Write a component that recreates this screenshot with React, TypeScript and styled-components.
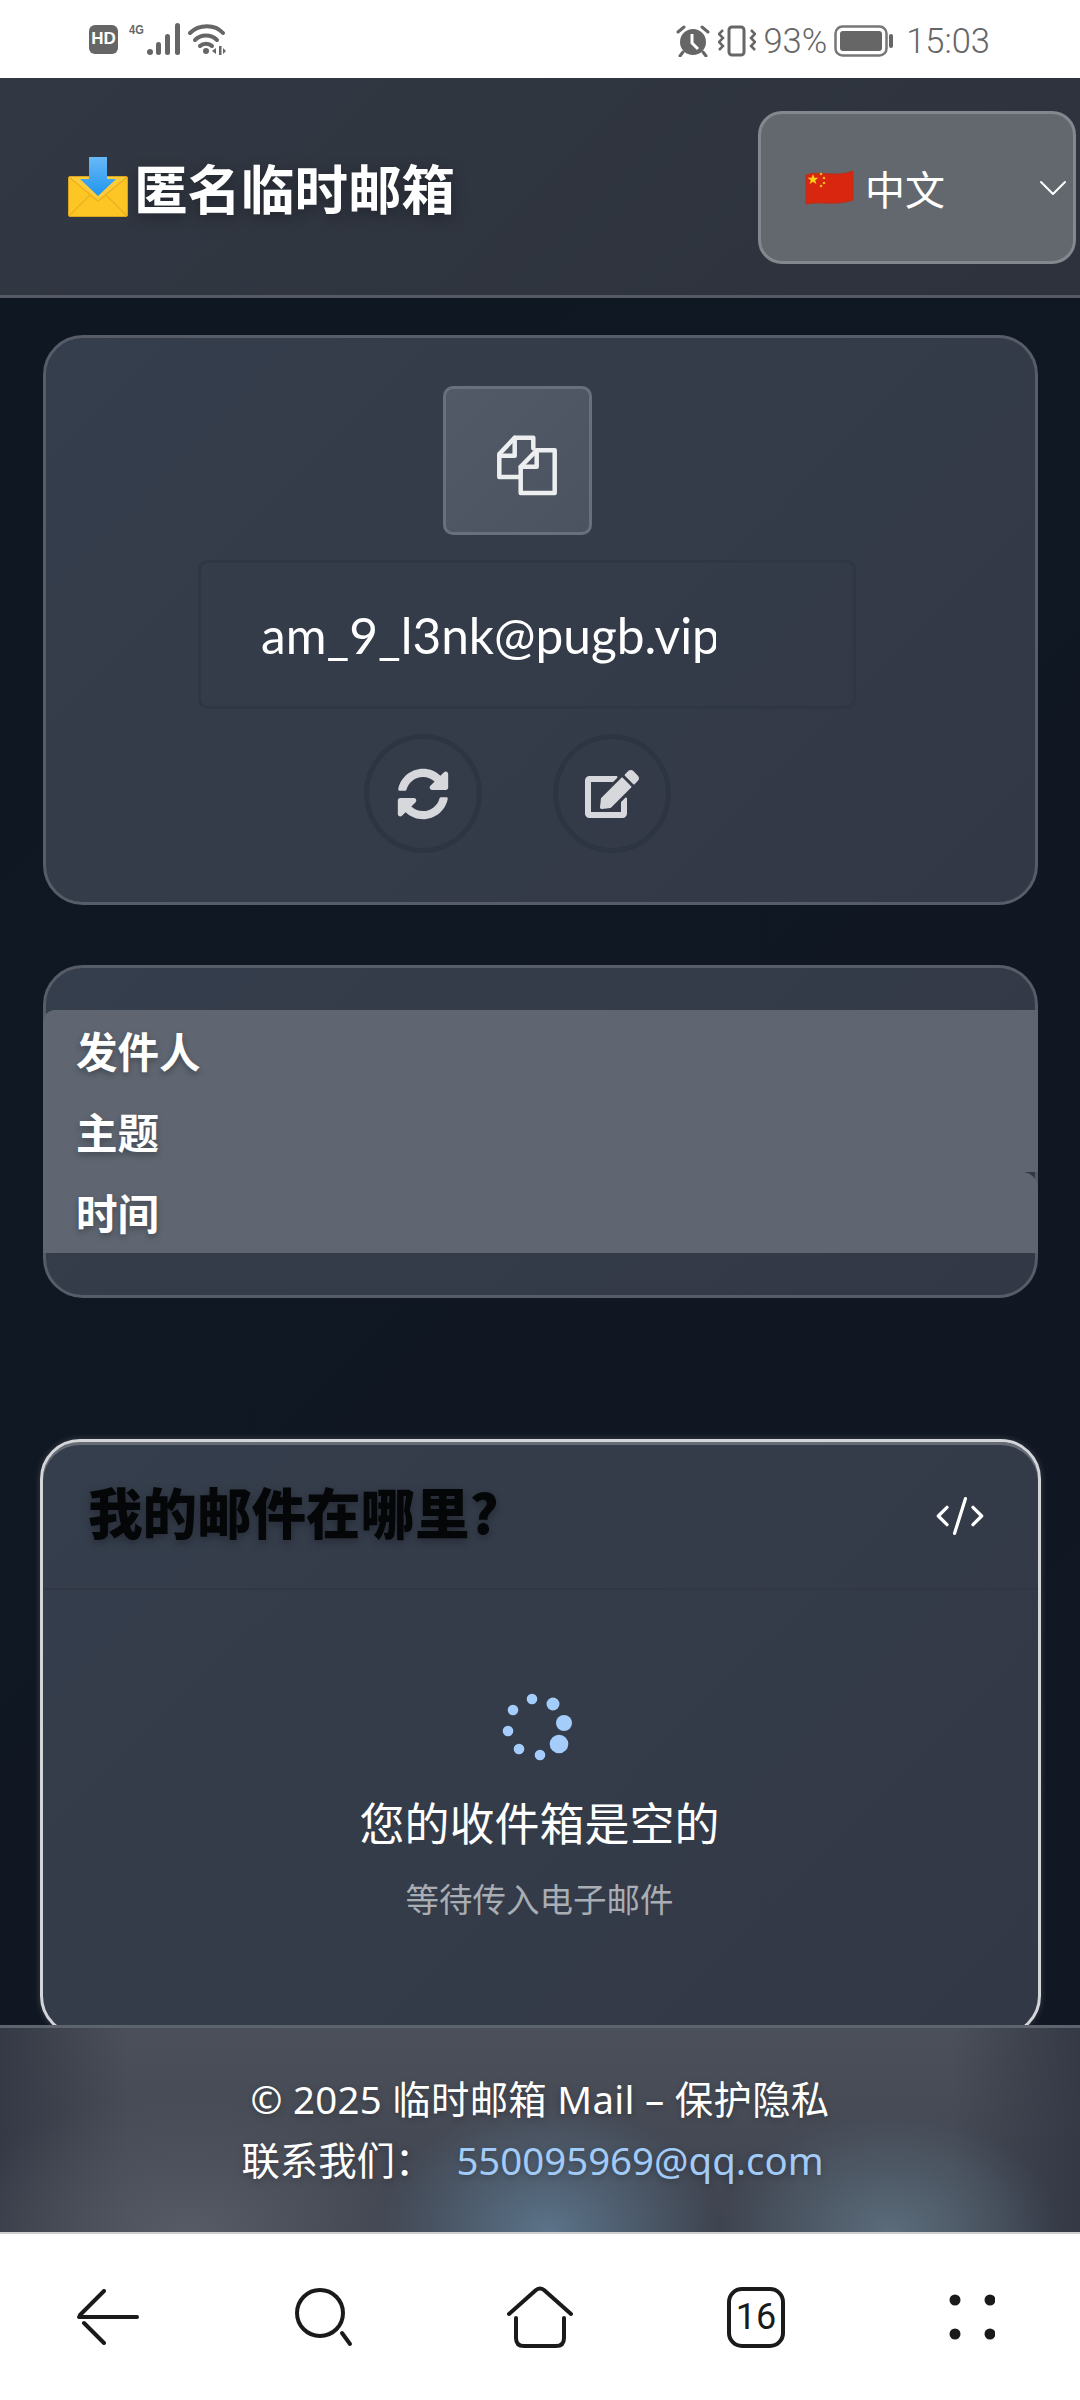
import styled, { createGlobalStyle } from "styled-components";
import { ChevronDown, CodeXml } from "lucide-react";
import { FaEdit, FaSyncAlt } from "react-icons/fa";

const cjk = `"Noto Sans CJK SC", "Noto Sans", sans-serif`;

const GlobalStyle = createGlobalStyle`
  html, body {
    margin: 0;
    padding: 0;
    background: #fff;
  }
  * {
    box-sizing: border-box;
  }
`;

const Page = styled.div`
  width: 1080px;
  height: 2400px;
  display: flex;
  flex-direction: column;
  overflow: hidden;
  font-family: ${cjk};
  color: #fff;
  background: linear-gradient(135deg, #0f1822, #111723);
`;

const StatusBar = styled.div`
  flex: 0 0 78px;
  display: flex;
  align-items: center;
  justify-content: space-between;
  padding: 0 90px 0 89px;
  background: #fff;
  color: #666;
`;

const StatusGroup = styled.div`
  display: flex;
  align-items: center;
`;

const StatusRight = styled(StatusGroup)`
  padding-top: 3px;
`;

const HdBadge = styled.span`
  width: 29px;
  height: 29px;
  border-radius: 6px;
  background: #666;
  color: #fff;
  font: 700 17px "Liberation Sans", sans-serif;
  display: flex;
  align-items: center;
  justify-content: center;
`;

const NetworkLabel = styled.span`
  align-self: flex-start;
  margin: 0 -1px 0 11px;
  width: 19px;
  font: 700 13px/14px "Liberation Sans", sans-serif;
  transform: scaleX(0.85);
  transform-origin: left top;
`;

const WifiSlot = styled.span`
  display: flex;
  margin-left: 5px;
`;

const StatusText = styled.span<{ $gap: number }>`
  margin-left: ${(p) => p.$gap}px;
  font: 300 34.5px/40px Roboto, sans-serif;
`;

const StatusIconSlot = styled.span<{ $gap: number }>`
  display: flex;
  margin-left: ${(p) => p.$gap}px;
`;

const Header = styled.header`
  flex: 0 0 220px;
  display: flex;
  align-items: center;
  justify-content: space-between;
  padding: 0 4px 0 68px;
  background: linear-gradient(135deg, #323843, #2d323c);
  border-bottom: 3px solid #555a64;
`;

const Brand = styled.div`
  display: flex;
  align-items: center;
  gap: 6px;
  font-size: 53.5px;
  font-weight: 700;
  line-height: 64px;
  text-shadow: 0 4px 14px rgba(0, 0, 0, 0.35);
`;

const LangSelect = styled.div`
  width: 318px;
  height: 153px;
  margin-top: 2px;
  display: flex;
  align-items: center;
  gap: 11px;
  padding: 0 0 0 43px;
  background: #63686f;
  border: 3px solid #83878e;
  border-radius: 24px;
  font-size: 40px;
`;

const Chevron = styled(ChevronDown)`
  margin: 0 -4px 0 auto;
`;

const Main = styled.main`
  flex: 1;
  min-height: 0;
  overflow: hidden;
  display: flex;
  flex-direction: column;
  padding: 37px 42px 0 43px;
`;

const Card = styled.section`
  flex-shrink: 0;
  background: linear-gradient(135deg, #353e4c, #333846);
  border: 3px solid #565c68;
  border-radius: 40px;
`;

const AddressCard = styled(Card)`
  height: 570px;
  display: flex;
  flex-direction: column;
  align-items: center;
  padding: 48px 47px 0 0;
`;

const CopyButton = styled.div`
  width: 149px;
  height: 149px;
  padding: 10px 0 0 20px;
  display: flex;
  align-items: center;
  justify-content: center;
  background: linear-gradient(135deg, #535a67, #4c5360);
  border: 3px solid #6a707b;
  border-radius: 10px;
`;

const AddressField = styled.div`
  width: 658px;
  height: 149px;
  margin: 25px 0 25px 20px;
  padding: 0 137px 0 60px;
  display: flex;
  align-items: center;
  border: 3px solid #2f3644;
  border-radius: 10px;
`;

const AddressText = styled.div`
  width: 100%;
  overflow: hidden;
  white-space: nowrap;
  font: 400 49.6px/60px Lato, sans-serif;
`;

const Actions = styled.div`
  display: flex;
  gap: 71px;
`;

const RoundButton = styled.div`
  width: 118px;
  height: 119px;
  display: flex;
  align-items: center;
  justify-content: center;
  border: 5px solid #2e3542;
  border-radius: 50%;
  color: #d6d8dc;
`;

const TableCard = styled(Card)`
  margin-top: 60px;
  padding: 42px 0;
`;

const HeadRow = styled.div<{ $corner?: "left" | "right" }>`
  height: 81px;
  margin: 0 -3px;
  padding: 0 0 2px 33px;
  display: flex;
  align-items: center;
  background: #5f6671;
  font-size: 41.5px;
  font-weight: 700;
  text-shadow: 0 3px 6px rgba(0, 0, 0, 0.3);
  border-top-left-radius: ${(p) => (p.$corner === "left" ? "12px" : "0")};
  border-top-right-radius: ${(p) => (p.$corner === "right" ? "16px" : "0")};
`;

const InboxCard = styled(Card)`
  height: 597px;
  margin: 141px -3px 0;
  border-color: #d3d5d9;
  box-shadow: inset 0 3px 0 #666c76, 0 0 6px rgba(255, 255, 255, 0.18);
`;

const InboxHeader = styled.div`
  height: 148px;
  display: flex;
  align-items: center;
  justify-content: space-between;
  padding: 0 52px 8px 45px;
  border-bottom: 2px solid #313744;
`;

const InboxTitle = styled.h2`
  margin: 0;
  font-size: 54.5px;
  font-weight: 900;
  line-height: 64px;
  color: #050608;
  text-shadow: 0 3px 8px rgba(0, 0, 0, 0.3);
`;

const CodeIcon = styled(CodeXml)`
  color: #fff;
  margin-top: 10px;
`;

const InboxBody = styled.div`
  display: flex;
  flex-direction: column;
  align-items: center;
  padding-top: 99px;
  padding-right: 2px;
`;

const Spinner = styled.svg`
  margin-right: 5px;
`;

const EmptyTitle = styled.div`
  margin-top: 31px;
  font-size: 45px;
  line-height: 60px;
`;

const EmptyHint = styled.div`
  margin-top: 24px;
  font-size: 33.5px;
  line-height: 44px;
  color: #a9adb4;
`;

const Footer = styled.footer`
  flex: 0 0 207px;
  padding-top: 41px;
  border-top: 3px solid #5e646d;
  text-align: center;
  font-family: "Noto Sans", ${cjk};
  font-size: 38.4px;
  line-height: 61px;
  text-shadow: 0 2px 6px rgba(0, 0, 0, 0.25);
  background:
    radial-gradient(170px 130px at 548px 100%, #5b7389, transparent),
    radial-gradient(170px 120px at 890px 100%, #5b6c7b, transparent),
    radial-gradient(240px 140px at 190px 100%, #575b65, transparent),
    linear-gradient(90deg, #343945, rgba(52, 57, 69, 0) 12%, rgba(52, 57, 69, 0) 88%, #343945),
    linear-gradient(180deg, #4b505a, #3e434f);
`;

const Copyright = styled.div`
  letter-spacing: 0.3px;
`;

const Mail = styled.span`
  margin: 0 15px 0 23px;
  color: #a3cbf7;
`;

const BottomNav = styled.nav`
  flex: 0 0 168px;
  display: grid;
  grid-template-columns: repeat(5, 1fr);
  align-items: center;
  justify-items: center;
  background: #fff;
  border-top: 2px solid #cfcfcf;
  color: #1a1a1a;
`;

const TabCount = styled.div`
  width: 58px;
  height: 61px;
  display: flex;
  align-items: center;
  justify-content: center;
  border: 4px solid #1a1a1a;
  border-radius: 15px;
  font: 400 36px/1 Roboto, sans-serif;
`;

const spinnerDots = [
  [31, 10, 5.3],
  [52, 15, 6.5],
  [63, 34, 8],
  [58, 55, 9.3],
  [39, 66, 5.3],
  [18, 60, 5.3],
  [7, 42, 5.3],
  [12, 21, 5.3],
];

function SignalIcon() {
  return (
    <svg width="36" height="32" viewBox="0 0 36 32" fill="#666">
      <rect x="0" y="26" width="6" height="6" rx="3" />
      <rect x="9" y="19" width="5" height="13" rx="2.5" />
      <rect x="18" y="11" width="5" height="21" rx="2.5" />
      <rect x="28" y="0" width="5" height="32" rx="2.5" />
    </svg>
  );
}

function WifiIcon() {
  return (
    <svg width="38" height="32" viewBox="0 0 38 32" fill="none" stroke="#666" strokeWidth="4" strokeLinecap="round">
      <path d="M2 10 C11 1 27 1 35 10" />
      <path d="M7 17 C13 11 23 11 29 17" />
      <path d="M12 23 C15 20 21 20 24 23" />
      <circle cx="18" cy="28" r="3" fill="#666" stroke="none" />
      <path d="M28 25 L24 28 L28 31 Z M35 25 L38 28 L35 31 Z" fill="#666" stroke="none" />
      <rect x="31" y="23" width="2.5" height="9" fill="#666" stroke="none" />
    </svg>
  );
}

function AlarmIcon() {
  return (
    <svg width="34" height="32" viewBox="0 0 34 32">
      <circle cx="17" cy="17" r="13" fill="#666" />
      <path d="M16 9 V18 L22 24" stroke="#fff" strokeWidth="3" fill="none" />
      <path d="M2 7 L8 2 M32 7 L26 2 M7 27 L4 31 M27 27 L30 31" stroke="#666" strokeWidth="3" strokeLinecap="round" />
    </svg>
  );
}

function VibrateIcon() {
  return (
    <svg width="38" height="32" viewBox="0 0 38 32" fill="none" stroke="#666" strokeWidth="3">
      <rect x="11" y="2" width="15" height="28" rx="3" />
      <path d="M5 5 L1 9 L5 13 L1 17 L5 21 L1 25" strokeWidth="2.5" />
      <path d="M33 5 L37 9 L33 13 L37 17 L33 21 L37 25" strokeWidth="2.5" />
    </svg>
  );
}

function BatteryIcon() {
  return (
    <svg width="60" height="32" viewBox="0 0 60 32">
      <rect x="1.5" y="1.5" width="51" height="29" rx="7" fill="none" stroke="#777" strokeWidth="2.5" />
      <rect x="6" y="6" width="42" height="20" rx="3" fill="#666" />
      <rect x="55" y="9" width="4" height="14" rx="2" fill="#666" />
    </svg>
  );
}

function InboxEmoji() {
  return (
    <svg width="60" height="60" viewBox="0 0 60 60">
      <defs>
        <linearGradient id="arrowFill" x1="0" y1="0" x2="0" y2="1">
          <stop offset="0" stopColor="#6ab8f7" />
          <stop offset="1" stopColor="#1e96f0" />
        </linearGradient>
      </defs>
      <rect x="0.5" y="19.5" width="59" height="40" rx="1.5" fill="#fdc625" stroke="#d9a520" />
      <path d="M1 59 L24 36 M59 59 L36 36" stroke="#eeb11f" strokeWidth="1.5" />
      <path d="M1 20 L30 44 L59 20" fill="#fccc3a" stroke="#eeb11f" strokeWidth="1.5" />
      <path d="M21 0 H39 V22 H48 L30 39 L12 22 H21 Z" fill="url(#arrowFill)" />
    </svg>
  );
}

function ChinaFlag() {
  return (
    <svg width="50" height="36" viewBox="0 0 50 36">
      <path
        d="M2 5 C13 0 32 8 49 1 V30 C34 36 16 31 2 34 Z"
        fill="#d9260f"
        stroke="#b8301c"
        strokeWidth="1"
        strokeLinejoin="round"
      />
      <path d="M9 4 L10.4 7.8 L14.4 7.8 L11.2 10.2 L12.4 14 L9 11.7 L5.6 14 L6.8 10.2 L3.6 7.8 L7.6 7.8 Z" fill="#fcd116" />
      <circle cx="17" cy="4" r="1.3" fill="#fcb316" />
      <circle cx="20" cy="8" r="1.3" fill="#fcb316" />
      <circle cx="20" cy="13" r="1.3" fill="#fcb316" />
      <circle cx="17" cy="16" r="1.3" fill="#fcb316" />
    </svg>
  );
}

function CopyIcon() {
  return (
    <svg width="60" height="61" viewBox="0 0 60 61" fill="none" stroke="#eceef0" strokeWidth="4.5" strokeLinejoin="round" strokeLinecap="round">
      <path d="M22 42 H2.3 V19 L17.7 2.7 H36.3 V13.3" />
      <path d="M17.7 2.7 V20.7 H2.3" />
      <path d="M23.7 31.7 L39.7 15.3 H57.7 V58 H23.7 Z" />
      <path d="M39.7 15.3 V31.7 H23.7" />
    </svg>
  );
}

function BackIcon() {
  return (
    <svg width="62" height="56" viewBox="0 0 62 56" fill="none" stroke="#1a1a1a" strokeWidth="4" strokeLinecap="round">
      <path d="M27 2 L3 26 M2 28 H60 M7 34 L27 54" />
    </svg>
  );
}

function SearchIcon() {
  return (
    <svg width="58" height="60" viewBox="0 0 58 60" fill="none" stroke="#1a1a1a" strokeWidth="4" strokeLinecap="round">
      <circle cx="25" cy="26" r="23" />
      <path d="M47 46 L55 57" />
    </svg>
  );
}

function HomeIcon() {
  return (
    <svg width="66" height="63" viewBox="0 0 66 63" fill="none" stroke="#1a1a1a" strokeWidth="4" strokeLinecap="round" strokeLinejoin="round">
      <path d="M2 28 L29 4 Q33 1 37 4 L64 28" />
      <path d="M9 32 V52 Q9 60 17 60 H49 Q57 60 57 52 V32" />
    </svg>
  );
}

function MoreIcon() {
  return (
    <svg width="46" height="46" viewBox="0 0 46 46" fill="#1a1a1a">
      <circle cx="6" cy="6" r="5.5" />
      <circle cx="41" cy="6" r="5.5" />
      <circle cx="6" cy="40" r="5.5" />
      <circle cx="41" cy="40" r="5.5" />
    </svg>
  );
}

export default function App() {
  return (
    <Page>
      <GlobalStyle />
      <StatusBar>
        <StatusGroup>
          <HdBadge>HD</HdBadge>
          <NetworkLabel>4G</NetworkLabel>
          <SignalIcon />
          <WifiSlot>
            <WifiIcon />
          </WifiSlot>
        </StatusGroup>
        <StatusRight>
          <AlarmIcon />
          <StatusIconSlot $gap={8}>
            <VibrateIcon />
          </StatusIconSlot>
          <StatusText $gap={7}>93%</StatusText>
          <StatusIconSlot $gap={7}>
            <BatteryIcon />
          </StatusIconSlot>
          <StatusText $gap={12}>15:03</StatusText>
        </StatusRight>
      </StatusBar>

      <Header>
        <Brand>
          <InboxEmoji />
          匿名临时邮箱
        </Brand>
        <LangSelect>
          <ChinaFlag />
          中文
          <Chevron size={48} strokeWidth={1} />
        </LangSelect>
      </Header>

      <Main>
        <AddressCard>
          <CopyButton>
            <CopyIcon />
          </CopyButton>
          <AddressField>
            <AddressText>am_9_l3nk@pugb.vip</AddressText>
          </AddressField>
          <Actions>
            <RoundButton>
              <FaSyncAlt size={52} />
            </RoundButton>
            <RoundButton>
              <FaEdit size={54} />
            </RoundButton>
          </Actions>
        </AddressCard>

        <TableCard>
          <HeadRow $corner="left">发件人</HeadRow>
          <HeadRow>主题</HeadRow>
          <HeadRow $corner="right">时间</HeadRow>
        </TableCard>

        <InboxCard>
          <InboxHeader>
            <InboxTitle>我的邮件在哪里?</InboxTitle>
            <CodeIcon size={52} strokeWidth={1.5} />
          </InboxHeader>
          <InboxBody>
            <Spinner width="72" height="72" viewBox="0 0 72 72" fill="#a4cdfb">
              {spinnerDots.map(([cx, cy, r]) => (
                <circle key={cx * 100 + cy} cx={cx} cy={cy} r={r} />
              ))}
            </Spinner>
            <EmptyTitle>您的收件箱是空的</EmptyTitle>
            <EmptyHint>等待传入电子邮件</EmptyHint>
          </InboxBody>
        </InboxCard>
      </Main>

      <Footer>
        <Copyright>© 2025 临时邮箱 Mail – 保护隐私</Copyright>
        <div>
          联系我们：<Mail>550095969@qq.com</Mail>
        </div>
      </Footer>

      <BottomNav>
        <BackIcon />
        <SearchIcon />
        <HomeIcon />
        <TabCount>16</TabCount>
        <MoreIcon />
      </BottomNav>
    </Page>
  );
}
